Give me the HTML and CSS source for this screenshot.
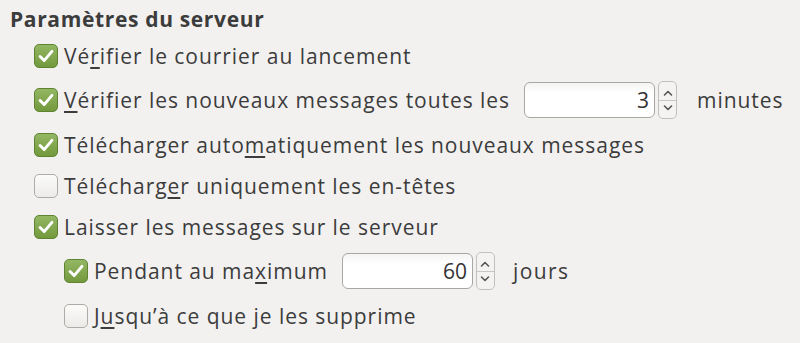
FILE: index.html
```html
<!DOCTYPE html>
<html lang="fr">
<head>
<meta charset="utf-8">
<link rel="stylesheet" href="styles.css">
</head>
<body>
<div class="panel">
  <div class="heading">Paramètres du serveur</div>
  <div class="row">
    <span class="cb on"><svg viewBox="0 0 24 24"><path d="M5.5 12.5 L10 17 L18.5 7"/></svg></span>
    <span class="label">Vé<span class="u">r</span>ifier le courrier au lancement</span>
  </div>
  <div class="row spin-row">
    <span class="cb on"><svg viewBox="0 0 24 24"><path d="M5.5 12.5 L10 17 L18.5 7"/></svg></span>
    <span class="label"><span class="u">V</span>érifier les nouveaux messages toutes les</span>
    <span class="spin">
      <span class="entry">3</span>
      <span class="arrows">
        <span class="arr up"><svg viewBox="0 0 10 8"><path d="M1.5 6 L5 2.5 L8.5 6"/></svg></span>
        <span class="arr down"><svg viewBox="0 0 10 8"><path d="M1.5 2 L5 5.5 L8.5 2"/></svg></span>
      </span>
    </span>
    <span class="unit unit-min">minutes</span>
  </div>
  <div class="row">
    <span class="cb on"><svg viewBox="0 0 24 24"><path d="M5.5 12.5 L10 17 L18.5 7"/></svg></span>
    <span class="label">Télécharger auto<span class="u">m</span>atiquement les nouveaux messages</span>
  </div>
  <div class="row">
    <span class="cb"></span>
    <span class="label">Télécharg<span class="u">e</span>r uniquement les en-têtes</span>
  </div>
  <div class="row">
    <span class="cb on"><svg viewBox="0 0 24 24"><path d="M5.5 12.5 L10 17 L18.5 7"/></svg></span>
    <span class="label">Laisser les messa<span class="u">g</span>es sur le serveur</span>
  </div>
  <div class="row spin-row sub">
    <span class="cb on"><svg viewBox="0 0 24 24"><path d="M5.5 12.5 L10 17 L18.5 7"/></svg></span>
    <span class="label">Pendant au ma<span class="u">x</span>imum</span>
    <span class="spin">
      <span class="entry">60</span>
      <span class="arrows">
        <span class="arr up"><svg viewBox="0 0 10 8"><path d="M1.5 6 L5 2.5 L8.5 6"/></svg></span>
        <span class="arr down"><svg viewBox="0 0 10 8"><path d="M1.5 2 L5 5.5 L8.5 2"/></svg></span>
      </span>
    </span>
    <span class="unit unit-days">jours</span>
  </div>
  <div class="row sub">
    <span class="cb"></span>
    <span class="label">J<span class="u">u</span>squ’à ce que je les supprime</span>
  </div>
</div>
</body>
</html>
```
FILE: styles.css
```css
html, body {
  margin: 0;
  padding: 0;
  background: #f2f1f0;
}
body {
  width: 800px;
  height: 343px;
  overflow: hidden;
  font-family: "Open Sans", "DejaVu Sans", sans-serif;
  color: #3c3c3c;
  font-size: 21px;
  letter-spacing: 0.95px;
}
.panel {
  display: flex;
  flex-direction: column;
  padding: 4px 0 0 10px;
}
.heading {
  font-weight: bold;
  height: 31px;
  line-height: 31px;
  letter-spacing: 0.65px;
}
.row {
  display: flex;
  align-items: center;
  height: 41px;
  padding-left: 24px;
}
.row.spin-row {
  height: 48px;
}
.row.sub {
  padding-left: 54px;
}
.cb {
  box-sizing: border-box;
  width: 24px;
  height: 24px;
  border-radius: 5px;
  border: 1px solid #aeaba7;
  background: linear-gradient(#fbfbfa, #ecebea);
  margin-right: 6px;
  flex: none;
  display: flex;
  align-items: center;
  justify-content: center;
}
.cb.on {
  border-color: #5f8431;
  background: linear-gradient(#93b763, #73993d);
}
.cb svg {
  width: 22px;
  height: 22px;
}
.cb svg path {
  fill: none;
  stroke: #fff;
  stroke-width: 3.2;
  stroke-linecap: round;
  stroke-linejoin: round;
}
.label {
  white-space: nowrap;
}
.u {
  text-decoration: underline;
  text-underline-offset: 3px;
}
.spin {
  display: flex;
  align-items: stretch;
  height: 38px;
  margin-left: 14px;
  gap: 3px;
  letter-spacing: 0;
}
.entry {
  box-sizing: border-box;
  width: 131px;
  height: 36px;
  align-self: center;
  border: 1px solid #a9a7a3;
  border-radius: 6px;
  background: linear-gradient(#f4f4f3, #ffffff 30%);
  text-align: right;
  padding-right: 5px;
  line-height: 34px;
  color: #333;
}
.arrows {
  box-sizing: border-box;
  width: 19px;
  border: 1px solid #c2c0bd;
  border-radius: 5px;
  display: flex;
  flex-direction: column;
  background: #f4f3f2;
}
.arr {
  flex: 1;
  display: flex;
  justify-content: center;
}
.arr.up {
  align-items: flex-end;
  padding-bottom: 3px;
}
.arr.down {
  align-items: flex-start;
  padding-top: 3px;
}
.arr + .arr {
  border-top: 1px solid #c8c6c3;
}
.arr svg {
  width: 10px;
  height: 8px;
}
.arr svg path {
  fill: none;
  stroke: #555;
  stroke-width: 1.6;
  stroke-linecap: round;
  stroke-linejoin: round;
}
.unit-min {
  margin-left: 20px;
}
.unit-days {
  margin-left: 18px;
  letter-spacing: 1.4px;
}
```
